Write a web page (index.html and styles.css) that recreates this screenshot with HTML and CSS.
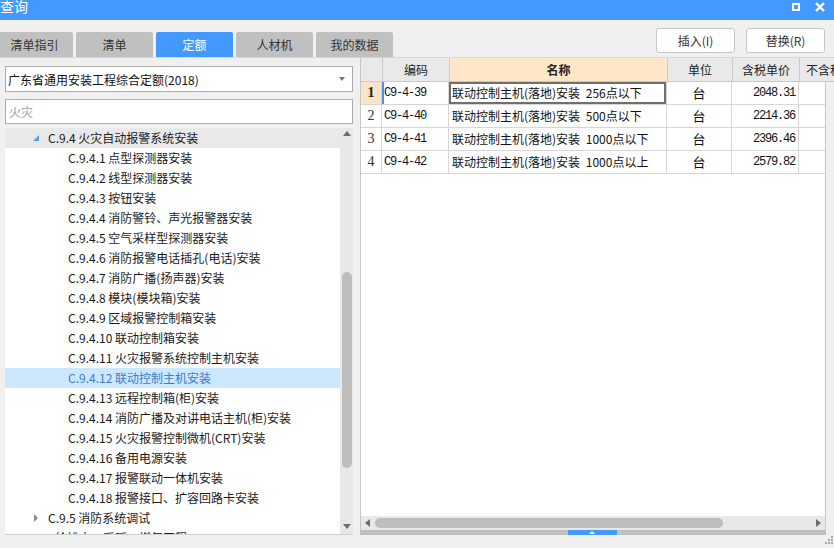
FILE: index.html
```html
<!DOCTYPE html>
<html lang="zh">
<head>
<meta charset="utf-8">
<title>查询</title>
<link rel="stylesheet" href="styles.css">
</head>
<body>
<div class="window">
  <div class="titlebar">
    <span class="title">查询</span>
    <div class="controls">
      <span class="max-btn"></span>
      <svg class="close-btn" width="10" height="10" viewBox="0 0 10 10"><path d="M1 1 L9 9 M9 1 L1 9" stroke="#fff" stroke-width="2.4"/></svg>
    </div>
  </div>
  <div class="toolbar">
    <div class="tabs">
      <div class="tab">清单指引</div>
      <div class="tab">清单</div>
      <div class="tab active">定额</div>
      <div class="tab">人材机</div>
      <div class="tab">我的数据</div>
    </div>
    <div class="actions">
      <button class="btn">插入(I)</button>
      <button class="btn">替换(R)</button>
    </div>
  </div>
  <div class="main">
    <div class="left">
      <div class="select"><span>广东省通用安装工程综合定额(2018)</span><span class="caret"></span></div>
      <div class="search">火灾</div>
      <div class="tree">
        <div class="tree-list">
          <div class="node lvl1 sticky"><span class="tri open"></span>C.9.4 火灾自动报警系统安装</div>
          <div class="node lvl2">C.9.4.1 点型探测器安装</div>
          <div class="node lvl2">C.9.4.2 线型探测器安装</div>
          <div class="node lvl2">C.9.4.3 按钮安装</div>
          <div class="node lvl2">C.9.4.4 消防警铃、声光报警器安装</div>
          <div class="node lvl2">C.9.4.5 空气采样型探测器安装</div>
          <div class="node lvl2">C.9.4.6 消防报警电话插孔(电话)安装</div>
          <div class="node lvl2">C.9.4.7 消防广播(扬声器)安装</div>
          <div class="node lvl2">C.9.4.8 模块(模块箱)安装</div>
          <div class="node lvl2">C.9.4.9 区域报警控制箱安装</div>
          <div class="node lvl2">C.9.4.10 联动控制箱安装</div>
          <div class="node lvl2">C.9.4.11 火灾报警系统控制主机安装</div>
          <div class="node lvl2 selected">C.9.4.12 联动控制主机安装</div>
          <div class="node lvl2">C.9.4.13 远程控制箱(柜)安装</div>
          <div class="node lvl2">C.9.4.14 消防广播及对讲电话主机(柜)安装</div>
          <div class="node lvl2">C.9.4.15 火灾报警控制微机(CRT)安装</div>
          <div class="node lvl2">C.9.4.16 备用电源安装</div>
          <div class="node lvl2">C.9.4.17 报警联动一体机安装</div>
          <div class="node lvl2">C.9.4.18 报警接口、扩容回路卡安装</div>
          <div class="node lvl1"><span class="tri closed"></span>C.9.5 消防系统调试</div>
          <div class="node lvl0">C.10 给排水、采暖、燃气工程</div>
        </div>
        <div class="vscroll">
          <span class="arrow-up"></span>
          <div class="vtrack"><div class="vthumb"></div></div>
          <span class="arrow-down"></span>
        </div>
      </div>
    </div>
    <div class="right">
      <div class="grid-head">
        <div class="hc"></div>
        <div class="hc">编码</div>
        <div class="hc name-h">名称</div>
        <div class="hc">单位</div>
        <div class="hc">含税单价</div>
        <div class="hc last">不含税单价</div>
      </div>
      <div class="grid-body">
        <div class="row current">
          <div class="c rn">1</div>
          <div class="c code">C9-4-39</div>
          <div class="c name">联动控制主机(落地)安装 256点以下</div>
          <div class="c unit">台</div>
          <div class="c price">2048.31</div>
          <div class="c"></div>
        </div>
        <div class="row">
          <div class="c rn">2</div>
          <div class="c code">C9-4-40</div>
          <div class="c name">联动控制主机(落地)安装 500点以下</div>
          <div class="c unit">台</div>
          <div class="c price">2214.36</div>
          <div class="c"></div>
        </div>
        <div class="row">
          <div class="c rn">3</div>
          <div class="c code">C9-4-41</div>
          <div class="c name">联动控制主机(落地)安装 1000点以下</div>
          <div class="c unit">台</div>
          <div class="c price">2396.46</div>
          <div class="c"></div>
        </div>
        <div class="row">
          <div class="c rn">4</div>
          <div class="c code">C9-4-42</div>
          <div class="c name">联动控制主机(落地)安装 1000点以上</div>
          <div class="c unit">台</div>
          <div class="c price">2579.82</div>
          <div class="c"></div>
        </div>
      </div>
      <div class="hscroll">
        <span class="arrow-left"></span>
        <div class="htrack"><div class="hthumb"></div></div>
        <span class="arrow-right"></span>
      </div>
      <div class="gripbar"><span class="grip-handle"><span class="grip-tri"></span></span></div>
    </div>
  </div>
  <div class="resize-grip">
    <svg width="10" height="10" viewBox="0 0 10 10" fill="#a8a8a8">
      <rect x="7" y="1" width="2" height="2"/>
      <rect x="4" y="4" width="2" height="2"/><rect x="7" y="4" width="2" height="2"/>
      <rect x="1" y="7" width="2" height="2"/><rect x="4" y="7" width="2" height="2"/><rect x="7" y="7" width="2" height="2"/>
    </svg>
  </div>
</div>
</body>
</html>
```

FILE: styles.css
```css
* { box-sizing: border-box; }
html, body { margin: 0; padding: 0; }
body {
  width: 834px;
  height: 548px;
  overflow: hidden;
  background: #f0f0f0;
  font-family: "Microsoft YaHei", "Noto Sans CJK SC", "Noto Sans", sans-serif;
  color: #222;
}
.window {
  position: relative;
  width: 834px;
  height: 548px;
  display: flex;
  flex-direction: column;
}
.titlebar {
  height: 20px;
  background: #4499ff;
  display: flex;
  justify-content: space-between;
  align-items: flex-start;
  color: #fff;
}
.title {
  font-size: 14px;
  line-height: 15px;
  margin-top: -1px;
}
.controls {
  display: flex;
  align-items: center;
  gap: 15px;
  margin: 2px 9px 0 0;
}
.max-btn {
  width: 8px;
  height: 8px;
  border: 2px solid #fff;
}
.close-btn { display: block; }

.toolbar {
  height: 38px;
  display: flex;
  justify-content: space-between;
  border-bottom: 1px solid #d6d6d6;
}
.tabs {
  display: flex;
  gap: 3px;
  align-self: flex-end;
  margin-left: -4px;
}
.tab {
  width: 77px;
  height: 25px;
  background: #c0c0c0;
  border-radius: 2px 2px 0 0;
  font-size: 12px;
  line-height: 25px;
  text-align: center;
  color: #333;
}
.tab.active {
  background: #4499ff;
  color: #fff;
}
.actions {
  display: flex;
  gap: 11px;
  padding-top: 8px;
  padding-right: 9px;
}
.btn {
  width: 79px;
  height: 25px;
  background: #fff;
  border: 1px solid #c6c6c6;
  border-radius: 3px;
  font-family: inherit;
  font-size: 12px;
  color: #333;
  padding: 0;
}

.main {
  display: flex;
  height: 477px;
}
.left {
  width: 360px;
  padding: 8px 7px 0 5px;
  display: flex;
  flex-direction: column;
}
.select {
  height: 26px;
  background: #fff;
  border: 1px solid #acacac;
  display: flex;
  justify-content: space-between;
  align-items: center;
  padding: 0 7px 0 2px;
  font-size: 12px;
  color: #111;
}
.caret {
  width: 0;
  height: 0;
  border-left: 3.5px solid transparent;
  border-right: 3.5px solid transparent;
  border-top: 4px solid #777;
}
.search {
  margin-top: 7px;
  height: 25px;
  background: #fff;
  border: 1px solid #acacac;
  padding-left: 3px;
  font-size: 12px;
  line-height: 23px;
  color: #a0a0a0;
}
.tree {
  margin-top: 4px;
  height: 407px;
  background: #fff;
  border-bottom: 1px solid #cfcfcf;
  display: flex;
  overflow: hidden;
}
.tree-list {
  width: 335px;
  overflow: hidden;
}
.node {
  height: 20px;
  line-height: 20px;
  font-size: 12px;
  white-space: nowrap;
  color: #1a1a1a;
  display: flex;
  align-items: center;
}
.node.lvl0 { padding-left: 23px; }
.node.lvl1 { padding-left: 27px; }
.node.lvl2 { padding-left: 63px; }
.node.sticky { background: #e9e9e9; }
.node.selected { background: #cce8ff; color: #3e7cc9; }
.tri {
  width: 16px;
  height: 8px;
  display: inline-block;
  position: relative;
}
.tri.open::before {
  content: "";
  position: absolute;
  left: 1px;
  top: 1px;
  border-left: 6px solid transparent;
  border-bottom: 6px solid #5b9be0;
}
.tri.closed::before {
  content: "";
  position: absolute;
  left: 2px;
  top: 0;
  border-top: 4px solid transparent;
  border-bottom: 4px solid transparent;
  border-left: 4px solid #8a8a8a;
}
.vscroll {
  width: 13px;
  background: #e8e8e8;
  display: flex;
  flex-direction: column;
  align-items: center;
}
.arrow-up, .arrow-down {
  width: 0;
  height: 0;
  border-left: 4px solid transparent;
  border-right: 4px solid transparent;
  flex: none;
}
.arrow-up { border-bottom: 5px solid #6d6d6d; margin-top: 3px; }
.arrow-down { border-top: 5px solid #6d6d6d; margin-bottom: 5px; }
.vtrack {
  flex: 1;
  width: 100%;
  padding: 136px 1px 0 2px;
}
.vthumb {
  width: 10px;
  height: 196px;
  background: #bdbdbd;
  border-radius: 5px;
}

.right {
  width: 474px;
  display: flex;
  flex-direction: column;
}
.grid-head {
  display: grid;
  grid-template-columns: 22px 67px 218px 65px 67px 35px;
  height: 24px;
  background: #e9e9e9;
  border-left: 1px solid #c6c6c6;
}
.hc {
  border-right: 1px solid #cacaca;
  border-bottom: 1px solid #cacaca;
  font-size: 12px;
  line-height: 23px;
  text-align: center;
  color: #222;
  white-space: nowrap;
  overflow: hidden;
}
.hc.name-h { background: #fee6c9; font-weight: bold; }
.hc.last { text-align: left; padding-left: 6px; border-right: none; }
.grid-body {
  width: 466px;
  flex: 1;
  background: #fff;
  border-left: 1px solid #c6c6c6;
  border-right: 1px solid #c6c6c6;
}
.row {
  display: grid;
  grid-template-columns: 21px 67px 218px 65px 67px 1fr;
  height: 23px;
}
.c {
  border-right: 1px solid #d6d6d6;
  border-bottom: 1px solid #d6d6d6;
  font-size: 12px;
  line-height: 22px;
  white-space: nowrap;
  overflow: hidden;
  color: #111;
}
.c:last-child { border-right: none; }
.c.rn {
  font-family: "Liberation Serif", "Times New Roman", serif;
  font-size: 14px;
  text-align: center;
  color: #333;
}
.c.code {
  padding-left: 2px;
  font-family: "Liberation Mono", "Noto Sans CJK SC", monospace;
  font-size: 12px;
  letter-spacing: -1.2px;
}
.c.name { padding-left: 3px; word-spacing: 3px; }
.c.unit { text-align: center; font-size: 13px; }
.c.price {
  text-align: right;
  padding-right: 3px;
  font-family: "Liberation Mono", monospace;
  font-size: 12px;
  letter-spacing: -1.2px;
}
.row.current .rn { background: #fde4c6; font-weight: bold; color: #222; }
.row.current .code { box-shadow: inset 2px 0 0 #3f96f7; }
.row.current .name { box-shadow: inset 0 0 0 2px #6f6f6f; }

.hscroll {
  width: 466px;
  height: 14px;
  background: #e8e8e8;
  border-left: 1px solid #c6c6c6;
  border-right: 1px solid #c6c6c6;
  display: flex;
  align-items: center;
  padding: 0 4px;
}
.arrow-left, .arrow-right {
  width: 0;
  height: 0;
  border-top: 4px solid transparent;
  border-bottom: 4px solid transparent;
  flex: none;
}
.arrow-left { border-right: 5px solid #6d6d6d; }
.arrow-right { border-left: 5px solid #6d6d6d; }
.htrack {
  flex: 1;
  padding-left: 5px;
}
.hthumb {
  width: 348px;
  height: 10px;
  background: #bdbdbd;
  border-radius: 5px;
}
.gripbar {
  width: 466px;
  height: 5px;
  background: #c0c0c0;
  display: flex;
  justify-content: center;
  padding-right: 10px;
}
.grip-handle {
  width: 49px;
  height: 5px;
  background: #4499ff;
  display: flex;
  justify-content: center;
  align-items: center;
  margin-left: 8px;
}
.grip-tri {
  width: 0;
  height: 0;
  border-left: 3px solid transparent;
  border-right: 3px solid transparent;
  border-bottom: 3px solid #fff;
}
.resize-grip {
  position: absolute;
  right: 0;
  bottom: 3px;
  width: 10px;
  height: 10px;
}
.resize-grip svg { display: block; }
```
